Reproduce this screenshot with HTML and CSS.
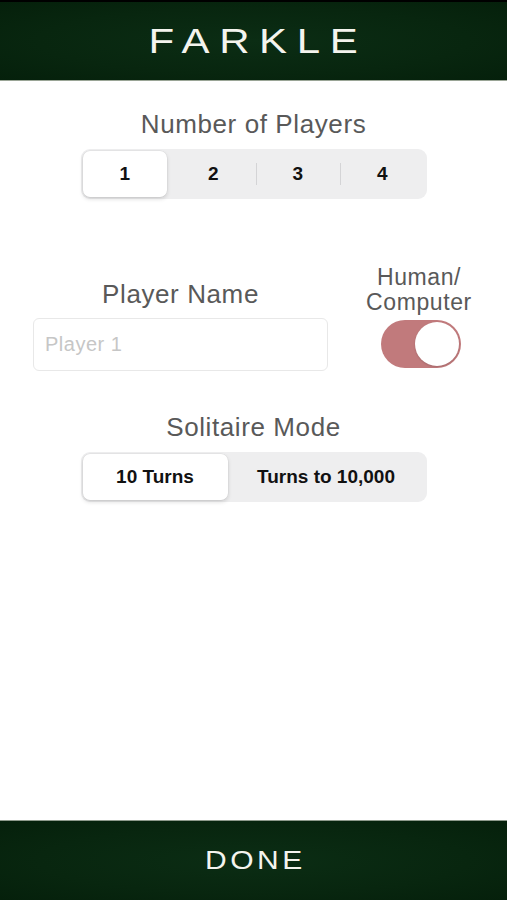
FILE: index.html
```html
<!DOCTYPE html>
<html>
<head>
<meta charset="utf-8">
<link rel="stylesheet" href="styles.css">
</head>
<body>
<div class="app">
  <header class="bar top-bar"><h1 class="title">FARKLE</h1></header>
  <main class="content">
    <div class="label">Number of Players</div>
    <div class="seg seg-players">
      <div class="seg-item selected">1</div>
      <div class="seg-item">2</div>
      <div class="seg-item divided">3</div>
      <div class="seg-item divided">4</div>
    </div>
    <div class="player-row">
      <div class="name-col">
        <div class="label">Player Name</div>
        <div class="input">Player 1</div>
      </div>
      <div class="type-col">
        <div class="label small">Human/<br>Computer</div>
        <div class="toggle"><div class="knob"></div></div>
      </div>
    </div>
    <div class="label solitaire-label">Solitaire Mode</div>
    <div class="seg seg-mode">
      <div class="seg-item selected turns">10 Turns</div>
      <div class="seg-item to-10k">Turns to 10,000</div>
    </div>
  </main>
  <footer class="bar bottom-bar"><span class="done">DONE</span></footer>
</div>
</body>
</html>
```
FILE: styles.css
```css
html, body {
  margin: 0;
  padding: 0;
  background: #fff;
}
.app {
  width: 507px;
  height: 900px;
  display: flex;
  flex-direction: column;
  font-family: "Liberation Sans", Arial, sans-serif;
}
.bar {
  background: radial-gradient(ellipse at center, #0b2d14 0%, #08260f 60%, #05200b 100%);
  display: flex;
  align-items: center;
  justify-content: center;
  color: #f4f4ee;
}
.top-bar {
  border-top: 2px solid #000;
  border-bottom: 1px solid #9aa596;
  box-sizing: border-box;
  height: 81px;
}
.title {
  margin: 0;
  font-weight: normal;
  font-size: 35px;
  letter-spacing: 8px;
  padding-left: 8px;
  transform: scaleX(1.2);
}
.content {
  flex: 1;
  padding-top: 28px;
  display: flex;
  flex-direction: column;
}
.label {
  font-size: 26px;
  line-height: 30px;
  letter-spacing: 0.6px;
  color: #595959;
  text-align: center;
}
.label.small {
  line-height: 25px;
  font-size: 23px;
}
.seg {
  margin: 10px auto 0;
  width: 346px;
  height: 50px;
  box-sizing: border-box;
  padding: 2px;
  background: #eeeeef;
  border-radius: 9px;
  display: flex;
}
.seg-item {
  flex: 1;
  display: flex;
  align-items: center;
  justify-content: center;
  font-size: 19px;
  font-weight: bold;
  color: #111;
  position: relative;
}
.seg-item.selected {
  background: #fff;
  border-radius: 7px;
  box-shadow: 0 2px 4px rgba(0,0,0,0.14), 0 0 0 0.5px rgba(0,0,0,0.06);
}
.seg-item.divided::before {
  content: "";
  position: absolute;
  left: 0;
  top: 12px;
  bottom: 12px;
  width: 1px;
  background: #d4d4d6;
}
.seg-players .seg-item.selected {
  margin-right: 4px;
}
.player-row {
  margin-top: 66px;
  display: flex;
  align-items: flex-start;
  padding-left: 33px;
  gap: 32px;
}
.name-col {
  width: 295px;
  padding-top: 14px;
  display: flex;
  flex-direction: column;
}
.input {
  margin-top: 9px;
  height: 53px;
  box-sizing: border-box;
  border: 1px solid #e8e8e8;
  border-radius: 6px;
  padding-left: 11px;
  display: flex;
  align-items: center;
  font-size: 20px;
  letter-spacing: 0.5px;
  color: #c6c6c6;
}
.type-col {
  width: 118px;
  display: flex;
  flex-direction: column;
  align-items: center;
}
.toggle {
  margin-top: 5px;
  margin-left: 3px;
  width: 80px;
  height: 48px;
  border-radius: 24px;
  background: #c17a7c;
  box-sizing: border-box;
  padding: 2px;
  display: flex;
  justify-content: flex-end;
}
.knob {
  width: 44px;
  height: 44px;
  border-radius: 50%;
  background: #fff;
  box-shadow: 0 1px 2px rgba(0,0,0,0.15);
}
.solitaire-label {
  margin-top: 41px;
}
.seg-mode .turns {
  flex: 0 0 145px;
}
.seg-mode .to-10k {
  flex: 1;
}
.bottom-bar {
  height: 80px;
  border-top: 1px solid #8e9a8c;
  box-sizing: border-box;
}
.done {
  font-size: 25px;
  letter-spacing: 3px;
  padding-left: 3px;
  transform: scaleX(1.2);
}
```
